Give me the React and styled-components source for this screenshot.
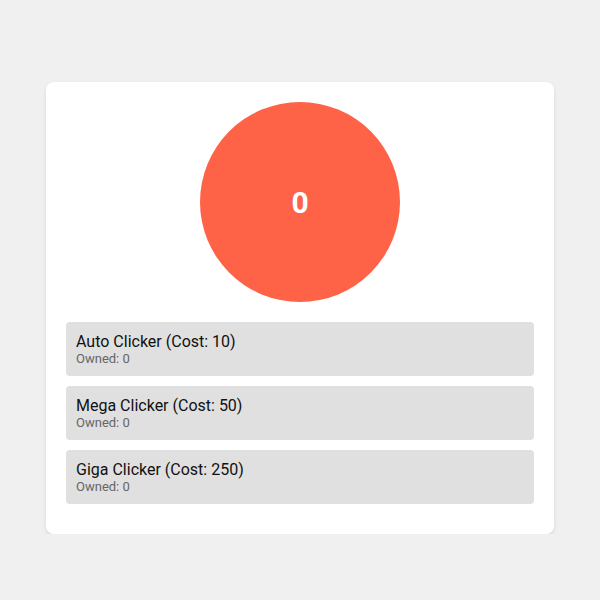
import React, { useState } from "react"
import styled, { createGlobalStyle } from "styled-components"

const GlobalStyle = createGlobalStyle`
  html, body {
    margin: 0;
    padding: 0;
    background: #f0f0f0;
    font-family: Roboto, "Liberation Sans", sans-serif;
  }
`

const Page = styled.div`
  display: flex;
  justify-content: center;
  padding-top: 82px;
`

const Card = styled.div`
  width: 508px;
  box-sizing: border-box;
  background: #fff;
  border-radius: 8px;
  box-shadow: 0 2px 4px rgba(0, 0, 0, 0.1);
  padding: 20px 20px 30px;
  display: flex;
  flex-direction: column;
  align-items: center;
  gap: 20px;
`

const Clicker = styled.button`
  width: 200px;
  height: 200px;
  border-radius: 50%;
  border: none;
  background: #ff6347;
  color: #fff;
  font-family: inherit;
  font-size: 30px;
  font-weight: 700;
  cursor: pointer;
  padding: 0;
`

const List = styled.div`
  width: 100%;
  display: flex;
  flex-direction: column;
  gap: 10px;
`

const Upgrade = styled.div`
  background: #e0e0e0;
  border-radius: 4px;
  padding: 10px;
  height: 54px;
  box-sizing: border-box;
  cursor: pointer;
`

const Name = styled.div`
  font-size: 16px;
  line-height: 19px;
  color: #111;
`

const Owned = styled.div`
  font-size: 13px;
  line-height: 15px;
  color: #666;
`

const upgrades = [
  { name: "Auto Clicker", cost: 10 },
  { name: "Mega Clicker", cost: 50 },
  { name: "Giga Clicker", cost: 250 },
]

export default function App() {
  const [count, setCount] = useState(0)
  return (
    <Page>
      <GlobalStyle />
      <Card>
        <Clicker onClick={() => setCount(count + 1)}>{count}</Clicker>
        <List>
          {upgrades.map(u => (
            <Upgrade key={u.name}>
              <Name>
                {u.name} (Cost: {u.cost})
              </Name>
              <Owned>Owned: 0</Owned>
            </Upgrade>
          ))}
        </List>
      </Card>
    </Page>
  )
}
